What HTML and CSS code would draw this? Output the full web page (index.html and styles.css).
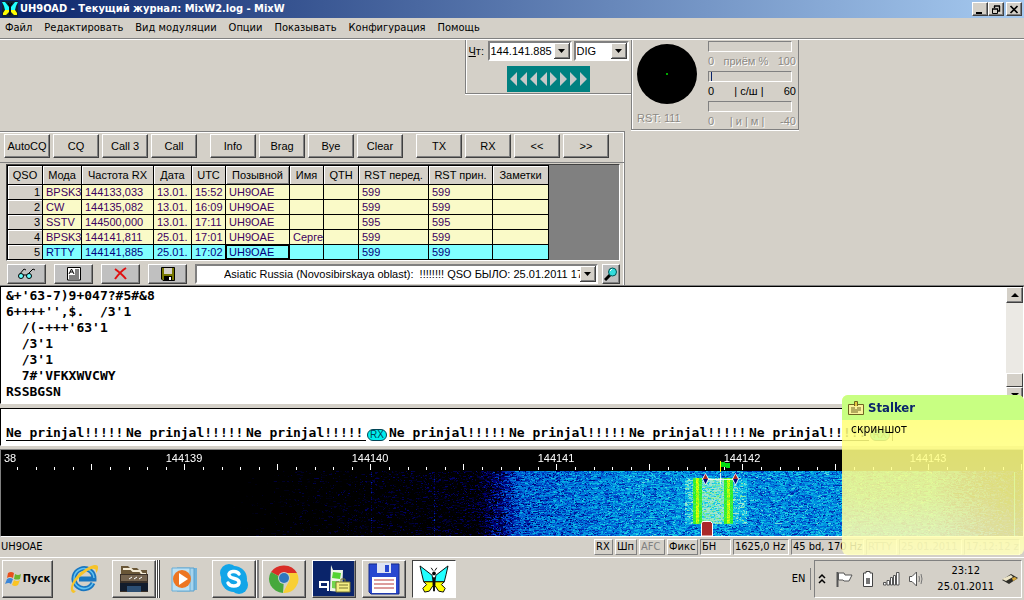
FILE: index.html
```html
<!DOCTYPE html>
<html lang="ru">
<head>
    <meta charset="UTF-8">
    <meta name="viewport" content="width=device-width, initial-scale=1.0">
    <title>UH9OAD - Текущий журнал: MixW2.log - MixW</title>
    <link rel="stylesheet" href="styles.css">
</head>
<body>
    <svg class="defs" width="0" height="0">
        <symbol id="butterfly" viewBox="0 0 32 30">
            <path d="M1 1 L14 11 L15 18 L5 18 L3 10Z M31 1 L18 11 L17 18 L27 18 L29 10Z" fill="#2ff" stroke="#000"/>
            <path d="M15 18 L5 18 L8 21 L4 25 L6 29 L11 28 L15 22Z M17 18 L27 18 L24 21 L28 25 L26 29 L21 28 L17 22Z" fill="#ff0" stroke="#000"/>
            <path d="M16 13 V28" stroke="#000" stroke-width="2"/>
            <circle cx="16" cy="9" r="2"/>
            <path d="M13 3 L15 6 M19 3 L17 6" stroke="#000"/>
        </symbol>
    </svg>

    <header class="titlebar">
        <svg class="title-icon" viewBox="0 0 16 16">
            <path d="M0 1H3L7 6V9H3L2 5Z M16 1H13L9 6V9H13L14 5Z" fill="#2ff"/>
            <path d="M3 9H7V11L4 14H1V12Z M13 9H9V11L12 14H15V12Z" fill="#ff0"/>
            <path d="M8 5V14 M6 2L8 5L10 2" stroke="#000" fill="none"/>
        </svg>
        <h1>UH9OAD - Текущий журнал: MixW2.log - MixW</h1>
        <button class="win-btn" aria-label="Свернуть"><svg width="10" height="9"><path d="M1 8H7" stroke="#000" stroke-width="2"/></svg></button>
        <button class="win-btn" aria-label="Восстановить"><svg width="10" height="9"><path d="M3 1H9 M3.5 1V3 M8.5 1V6H7 M1 4H7" stroke="#000" stroke-width="1.4" fill="none"/><path d="M1.5 4V8.5H6.5V4" stroke="#000" fill="none"/></svg></button>
        <button class="win-btn close" aria-label="Закрыть"><svg width="10" height="9"><path d="M1.5 1L8.5 8 M8.5 1L1.5 8" stroke="#000" stroke-width="1.7"/></svg></button>
    </header>

    <nav class="menu">
        <a href="#">Файл</a>
        <a href="#">Редактировать</a>
        <a href="#">Вид модуляции</a>
        <a href="#">Опции</a>
        <a href="#">Показывать</a>
        <a href="#">Конфигурация</a>
        <a href="#">Помощь</a>
    </nav>

    <section class="instruments">
        <div class="freq-panel">
            <div class="freq-row">
                <label for="freq"><u>Ч</u>т:</label>
                <select id="freq" class="combo freq"><option>144.141.885</option></select>
                <select id="mode" class="combo mode" aria-label="Режим"><option>DIG</option></select>
            </div>
            <button class="tuner" aria-label="Настройка частоты">
                <svg width="83" height="26" viewBox="0 0 83 26">
                    <path d="M3 13L10 6V20Z M13 13L20 6V20Z M23 13L30 6V20Z M33 13L40 6V20Z M43 6L50 13L43 20Z M53 6L60 13L53 20Z M63 6L70 13L63 20Z M73 6L80 13L73 20Z" fill="#c8c8c8"/>
                </svg>
            </button>
        </div>
        <div class="meter-panel">
            <div class="scope-col">
                <div class="scope"></div>
                <span class="off">RST: 111</span>
            </div>
            <div class="meters">
                <div class="bar"></div>
                <div class="scale off"><span>0</span><span>приём %</span><span>100</span></div>
                <div class="bar level"></div>
                <div class="scale"><span>0</span><span>| с/ш |</span><span>60</span></div>
                <div class="bar"></div>
                <div class="scale off"><span>0</span><span>| и | м |</span><span>-40</span></div>
            </div>
        </div>
    </section>

    <section class="logger">
        <div class="macros">
            <button>AutoCQ</button>
            <button>CQ</button>
            <button>Call 3</button>
            <button>Call</button>
            <button class="group">Info</button>
            <button>Brag</button>
            <button>Bye</button>
            <button>Clear</button>
            <button class="group">TX</button>
            <button>RX</button>
            <button>&lt;&lt;</button>
            <button>&gt;&gt;</button>
        </div>
        <div class="log">
            <table>
                <colgroup>
                    <col class="c-num"><col class="c-mode"><col class="c-freq"><col class="c-date"><col class="c-utc"><col class="c-call"><col class="c-utc"><col class="c-num"><col class="c-rst"><col class="c-call"><col class="c-note">
                </colgroup>
                <thead>
                    <tr><th>QSO</th><th>Мода</th><th>Частота RX</th><th>Дата</th><th>UTC</th><th class="sorted">Позывной</th><th>Имя</th><th>QTH</th><th>RST перед.</th><th>RST прин.</th><th>Заметки</th></tr>
                </thead>
                <tbody>
                    <tr><th>1</th><td>BPSK31</td><td>144133,033</td><td>13.01.</td><td>15:52</td><td>UH9OAE</td><td></td><td></td><td>599</td><td>599</td><td></td></tr>
                    <tr><th>2</th><td>CW</td><td>144135,082</td><td>13.01.</td><td>16:09</td><td>UH9OAE</td><td></td><td></td><td>599</td><td>599</td><td></td></tr>
                    <tr><th>3</th><td>SSTV</td><td>144500,000</td><td>13.01.</td><td>17:11</td><td>UH9OAE</td><td></td><td></td><td>595</td><td>595</td><td></td></tr>
                    <tr><th>4</th><td>BPSK31</td><td>144141,811</td><td>25.01.</td><td>17:01</td><td>UH9OAE</td><td>Сергей</td><td></td><td>599</td><td>599</td><td></td></tr>
                    <tr class="current"><th>5</th><td>RTTY</td><td>144141,885</td><td>25.01.</td><td>17:02</td><td class="active">UH9OAE</td><td></td><td></td><td>599</td><td>599</td><td></td></tr>
                </tbody>
            </table>
        </div>
        <div class="log-tools">
            <button class="tool" aria-label="Просмотр">
                <svg width="20" height="14"><path d="M2 8L7 2L9 3 M10 8L16 2L18 3 M6 8H10" stroke="#000" fill="none"/><circle cx="4" cy="9" r="2.5" fill="#6ff" stroke="#000"/><circle cx="12" cy="9" r="2.5" fill="#6ff" stroke="#000"/></svg>
            </button>
            <button class="tool" aria-label="Карточка">
                <svg width="16" height="14"><path d="M1.5 .5H14.5V13H1.5Z" fill="#fff" stroke="#000"/><path d="M3 7L5.5 2L8 7 M4 5H7 M9 3H13 M9 5H13 M9 7H13 M3 9H13 M3 11H13" stroke="#000" fill="none"/></svg>
            </button>
            <button class="tool" aria-label="Удалить">
                <svg width="16" height="14"><path d="M2 2C6 5 10 8 13 12 M13 1C8 4 5 8 2 12" stroke="#e01010" stroke-width="2" fill="none"/></svg>
            </button>
            <button class="tool" aria-label="Сохранить">
                <svg width="14" height="14"><path d="M.5 .5H13.5V13.5H2L.5 12Z" fill="#777700" stroke="#000"/><path d="M3 1H11V7H3Z" fill="#d4d0c8"/><path d="M3 9H11V13H3Z" fill="#000"/><path d="M8 10H10V13H8Z" fill="#fff"/></svg>
            </button>
            <div class="lookup">
                <select class="combo info" aria-label="Информация"><option>Asiatic Russia (Novosibirskaya oblast):&nbsp; !!!!!!!! QSO БЫЛО: 25.01.2011 17:02</option></select>
                <button class="tool find" aria-label="Найти">
                    <svg width="14" height="14"><path d="M1 13L6 8" stroke="#000" stroke-width="3"/><circle cx="8.500" cy="5" r="4" fill="#3dd" stroke="#055"/><path d="M6 4L8 2" stroke="#fff"/></svg>
                </button>
            </div>
        </div>
    </section>

    <section class="rx-window">
<pre class="mono">&amp;+'63-7)9+047?#5#&amp;8
6++++'',$.  /3'1
  /(-+++'63'1
  /3'1
  /3'1
  7#'VFKXWVCWY
RSSBGSN</pre>
        <div class="scrollbar">
            <button aria-label="Вверх"><svg width="8" height="4"><path d="M4 0L8 4H0Z"/></svg></button>
            <div class="thumb"></div>
            <button aria-label="Вниз"><svg width="8" height="4"><path d="M0 0H8L4 4Z"/></svg></button>
        </div>
    </section>

    <section class="tx-window mono">
        <span class="call">Ne prinjal!!!!!</span><span class="call">Ne prinjal!!!!!</span><span class="call">Ne prinjal!!!!!</span><span class="rx-mark">RX</span><span class="call">Ne prinjal!!!!!</span><span class="call">Ne prinjal!!!!!</span><span class="call">Ne prinjal!!!!!</span><span class="call">Ne prinjal!!!!!</span><span class="rx-mark">RX</span><span class="caret"></span>
    </section>

    <section class="spectrum">
        <div class="ruler">
            <span class="edge">38</span><span>144139</span><span>144140</span><span>144141</span><span>144142</span><span>144143</span>
        </div>
        <canvas id="waterfall"></canvas>
        <svg class="marker" width="44" height="76" viewBox="0 0 44 76">
            <path d="M20.500 0V11" stroke="#ff0"/>
            <path d="M21 1H25V2H30V7H26V6H21Z" fill="#0d1"/>
            <path d="M5 18.500H35 M20.500 12V23" stroke="#fff" stroke-opacity=".8"/>
            <path d="M5.500 12L9 18L5.500 24L2 18Z M35.500 12L39 18L35.500 24L32 18Z" fill="#fff"/>
            <path d="M5.500 13L8 18H3Z M35.500 13L38 18H33Z" fill="#a22"/>
            <path d="M5.500 23L8 18H3Z M35.500 23L38 18H33Z" fill="#007"/>
            <path d="M2.500 60.500H10.500L12.500 62.500V75H1.500V62.500Z" fill="#aa2a2a" stroke="#fff"/>
        </svg>
    </section>

    <footer class="statusbar">
        <span class="who">UH9OAE</span>
        <span class="cell raised w-xs">RX</span>
        <span class="cell raised w-s">Шп</span>
        <span class="cell raised w-m dim">AFC</span>
        <span class="cell raised w-l">Фикс</span>
        <span class="cell w-l">БН</span>
        <span class="cell w-xl">1625,0 Hz</span>
        <span class="cell w-xxl">45 bd, 170 Hz</span>
        <span class="cell w-l dim">RTTY</span>
        <span class="cell w-date dim">25.01.2011</span>
        <span class="cell w-xl dim">17:12:12 z</span>
    </footer>

    <footer class="taskbar">
        <button class="start">
            <svg width="18" height="18" viewBox="0 0 18 18"><path d="M3 3Q6 1 9 3L8 8Q5 6 2 8Z" fill="#e8501c"/><path d="M10 4Q13 6 16 4L15 9Q12 10 9 9Z" fill="#6cb52d"/><path d="M2 9Q5 7 8 9L6 14Q4 12 0 14Z" fill="#3a86d8"/><path d="M9 10Q12 12 15 10L13 15Q10 17 7 15Z" fill="#fbc422"/></svg>
            Пуск
        </button>
        <button class="task flat" aria-label="Internet Explorer">
            <svg width="34" height="32" viewBox="0 0 34 32"><path d="M26 20A10 10 0 1 1 27 16H12" fill="none" stroke="#1976c0" stroke-width="5"/><path d="M26 20A10 10 0 1 1 27 15" fill="none" stroke="#62c3f2" stroke-width="1.500"/><path d="M7 30C1 29 4 17 14 9S32 0 31 5C31 7 30 9 29 10C30 3 23 5 15 12S3 27 9 28Z" fill="#f6c32a"/></svg>
        </button>
        <button class="task stack2" aria-label="Проводник">
            <svg width="32" height="30" viewBox="0 0 32 30"><path d="M3 2H10L12 4H19L21 6H29V13H3Z" fill="#695637"/><path d="M5 5H13L15 7H22L24 10H28" stroke="#f3ead5" stroke-width="2" fill="none"/><path d="M2 10H30V28H2Z" fill="#3a3028"/><path d="M3 11H29V17H3Z" fill="#75644f"/><path d="M11 15L14 13M16 15L19 13M21 15L24 13" stroke="#fff"/><path d="M2 19H30V27H2Z" fill="#121c2c"/><path d="M9 22H23V28H9Z" fill="#2c4e72"/></svg>
        </button>
        <button class="task flat" aria-label="Проигрыватель">
            <svg width="32" height="30" viewBox="0 0 32 30"><path d="M12 4H29V26H12Z" fill="#71b4dc"/><path d="M9 4H26V27H9Z" fill="#a5d4ee" stroke="#5aa0cc"/><path d="M4 4H22V27H4Z" fill="#bde1f4" stroke="#6aaed6"/><circle cx="14" cy="15" r="9" fill="#ed7623"/><path d="M11 9L20 15L11 21Z" fill="#fff"/></svg>
        </button>
        <button class="task stack" aria-label="Skype">
            <svg width="32" height="32" viewBox="0 0 32 32"><circle cx="11" cy="10" r="9" fill="#12a5e8"/><circle cx="21" cy="22" r="9" fill="#12a5e8"/><circle cx="16" cy="16" r="13" fill="#12a5e8"/><path d="M21 11C19 7 10 8 11 12C12 17 22 14 21 20C20 24 12 24 10 20" fill="none" stroke="#fff" stroke-width="3.500" stroke-linecap="round"/></svg>
        </button>
        <button class="task" aria-label="Chrome">
            <svg width="32" height="30" viewBox="0 0 32 30"><path d="M16 15L3 8A15 14 0 0 1 29 9H16Z" fill="#d92d27"/><path d="M16 15L15 29A15 14 0 0 1 3 8Z" fill="#46a83c"/><path d="M16 9H29A14 14 0 0 1 15 29L21 17Z" fill="#f8cf35"/><circle cx="16" cy="14" r="6" fill="#c8d0d0"/><circle cx="16" cy="14" r="5" fill="#2d77bd"/></svg>
        </button>
        <button class="task navy" aria-label="QIP">
            <svg width="34" height="32" viewBox="0 0 34 32"><path d="M14 2L16 7H26L25 29L13 28Z" fill="#eef4e5"/><path d="M16 9L24 10L23 16L15 15Z" fill="#53d331"/><path d="M15 18L22 18L21 26L15 25Z" fill="#74d64f"/><path d="M11 28V19H3V24H10" fill="none" stroke="#fff" stroke-width="2"/><path d="M19 19H33V29H19Z" fill="#f4ef84" stroke="#7b7730"/><path d="M24 19V16H28V19M22 22H31M22 25H31" stroke="#7b7730" fill="none"/></svg>
        </button>
        <button class="task" aria-label="Total Commander">
            <svg width="32" height="32" viewBox="0 0 32 32"><path d="M1 1H31V31H3L1 29Z" fill="#2848d0" stroke="#152a8c"/><path d="M9 0H23V10H9Z" fill="#dfe4f3"/><path d="M17 2H21V9H17Z" fill="#2848d0"/><path d="M4 14H28V30H4Z" fill="#fff"/><path d="M6 17H26M6 21H26M6 25H26" stroke="#b93a3a"/></svg>
        </button>
        <button class="task pressed" aria-label="MixW">
            <svg width="32" height="28"><use href="#butterfly"/></svg>
        </button>
        <span class="lang">EN</span>
        <div class="tray">
            <svg width="9" height="12" viewBox="0 0 9 12"><path d="M1 5L4 2L7 5M1 10L4 7L7 10" fill="none" stroke="#000" stroke-width="1.500"/></svg>
            <svg width="18" height="18" viewBox="0 0 18 18"><path d="M2.500 2V17" stroke="#555" stroke-width="2"/><path d="M3.500 3H9L10 5H17L14 11H9L8 10H3.500Z" fill="#fff" stroke="#555"/></svg>
            <svg width="14" height="18" viewBox="0 0 14 18"><path d="M5 1.500H9V3H11.500V16.500H2.500V3H5Z" fill="#fff" stroke="#444"/><path d="M5 8H9V14H5Z" fill="#777"/></svg>
            <svg width="17" height="14" viewBox="0 0 17 14"><path d="M.5 10.500H3V13H.5Z M4 8.500H6.500V13H4Z M7.500 5.500H9.500V13H7.500Z M10.500 3.500H12.500V13H10.500Z M13.500 .5H16V13H13.500Z" fill="#fff" stroke="#555"/></svg>
            <svg width="16" height="16" viewBox="0 0 16 16"><path d="M1.500 5.500H4L8.500 1V15L4 10.500H1.500Z" fill="#fff" stroke="#555"/><path d="M11 5Q12 8 11 11M13 3Q15 8 13 13" fill="none" stroke="#777"/></svg>
            <time>23:12<br>25.01.2011</time>
            <svg width="16" height="12" viewBox="0 0 16 12"><path d="M0 7L9 1L16 5L7 11Z" fill="#2d2d28"/><path d="M0 6L9 2L11 4L4 8Z" fill="#eee6c8"/><path d="M10 5L13 4L15 6L11 8Z" fill="#d8a838"/></svg>
        </div>
    </footer>

    <aside class="popup">
        <h2>
            <svg width="16" height="14" viewBox="0 0 16 14"><path d="M.5 3.500H15.500V13.500H.5Z" fill="#faf29a" stroke="#6e6522"/><path d="M6.500 5V.5H9.500V5" fill="#e8c840" stroke="#6e6522"/><path d="M3 7H7M9 7H13M3 9H13M3 11H10" stroke="#6e6522"/></svg>
            Stalker
        </h2>
        <p>скриншот</p>
    </aside>

    <script src="waterfall.js"></script>
</body>
</html>
```

FILE: styles.css
```css
* {
    box-sizing: border-box;
}
body {
    margin: 0;
    height: 100vh;
    display: flex;
    flex-direction: column;
    position: relative;
    overflow: hidden;
    background: #d4d0c8;
    color: #000;
    font: 11px/14px "Liberation Sans", Arial, sans-serif;
}
body > * {
    flex: none;
}
button {
    display: flex;
    align-items: center;
    justify-content: center;
    padding: 0;
    background: #d4d0c8;
    border: 1px solid;
    border-color: #fff #404040 #404040 #fff;
    box-shadow: inset -1px -1px 0 #808080;
    color: #000;
    font: inherit;
}
svg {
    flex: none;
}
.defs {
    position: absolute;
}

/* title and menu */
.titlebar {
    display: flex;
    align-items: center;
    height: 18px;
    padding: 0 2px;
    background: linear-gradient(to right, #0a246a, #a6caf0);
}
.title-icon {
    width: 16px;
    height: 16px;
    margin-right: 2px;
    background: #123;
}
.titlebar h1 {
    flex: 1;
    margin: 0;
    color: #fff;
    font: bold 11px/18px Tahoma, "DejaVu Sans Condensed", sans-serif;
}
.win-btn {
    width: 16px;
    height: 14px;
}
.win-btn.close {
    margin-left: 2px;
}
.menu {
    display: flex;
    gap: 12px;
    height: 22px;
    padding: 0 5px;
    border-bottom: 1px solid #fff;
    box-shadow: inset 0 -1px 0 #808080;
    font: 11px/20px Tahoma, "DejaVu Sans Condensed", sans-serif;
}
.menu a {
    color: #000;
    text-decoration: none;
}

/* frequency and meters */
.instruments {
    display: flex;
    align-items: flex-start;
    height: 91px;
    padding-left: 465px;
}
.freq-panel,
.meter-panel {
    border: 1px solid #808080;
    border-top: 0;
    box-shadow: inset 1px 0 0 #fff, 0 1px 0 #fff;
}
.freq-panel {
    display: flex;
    flex-direction: column;
    align-items: center;
    gap: 5px;
    width: 166px;
    height: 54px;
    padding: 1px 3px;
    border-right: 0;
}
.freq-row {
    display: flex;
    align-items: center;
    gap: 2px;
}
.freq-row label {
    width: 17px;
}
.combo {
    appearance: none;
    height: 20px;
    margin: 0;
    padding: 0 16px 0 1px;
    border: 2px solid;
    border-color: #808080 #fff #fff #808080;
    border-radius: 0;
    outline: 0;
    color: #000;
    font: inherit;
    text-overflow: clip;
    background: #fff url("data:image/svg+xml,%3Csvg xmlns='http://www.w3.org/2000/svg' width='16' height='16'%3E%3Cpath d='M0 0H16V16H0Z' fill='%23404040'/%3E%3Cpath d='M0 0H15V15H0Z' fill='%23fff'/%3E%3Cpath d='M1 1H15V15H1Z' fill='%23808080'/%3E%3Cpath d='M1 1H14V14H1Z' fill='%23d4d0c8'/%3E%3Cpath d='M4 6H11L7.500 10Z'/%3E%3C/svg%3E") right center no-repeat;
}
.freq {
    width: 84px;
}
.mode {
    width: 55px;
}
.tuner {
    width: 83px;
    height: 26px;
    border: 0;
    background: #008080;
    box-shadow: none;
}
.meter-panel {
    display: flex;
    gap: 11px;
    width: 168px;
    height: 90px;
    padding: 1px 2px 0 5px;
}
.scope-col {
    width: 60px;
}
.scope {
    width: 60px;
    height: 60px;
    margin: 3px 0 7px;
    border-radius: 50%;
    background: radial-gradient(circle, #0a0 1px, #000 1px);
}
.off {
    color: #8c8984;
    text-shadow: 1px 1px 0 #fff;
}
.meters {
    flex: 1;
}
.bar {
    height: 11px;
    margin-right: 4px;
    border: 1px solid;
    border-color: #808080 #fff #fff #808080;
}
.level {
    box-shadow: inset 2px 0 0 #d4d0c8, inset 3px 0 0 #0a246a;
}
.scale {
    display: flex;
    justify-content: space-between;
    height: 19px;
    line-height: 18px;
}

/* macros and log */
.logger {
    width: 625px;
    height: 155px;
    border-top: 1px solid #808080;
    border-right: 1px solid #808080;
    box-shadow: inset 0 1px 0 #fff, inset -1px 0 0 #fff;
}
.macros {
    display: flex;
    gap: 3px;
    height: 31px;
    padding: 2px 4px 5px;
    border-bottom: 1px solid #808080;
}
.macros button {
    width: 46px;
    height: 24px;
}
.macros .group {
    margin-left: 10px;
}
.log {
    width: 614px;
    height: 97px;
    margin: 1px 0 3px 6px;
    border: 1px solid;
    border-color: #404040 #fff #fff #404040;
    background: #808080;
    overflow: hidden;
}
.log table {
    table-layout: fixed;
    width: 541px;
    border-collapse: collapse;
}
.c-num { width: 35px; }
.c-mode { width: 39px; }
.c-freq { width: 72px; }
.c-date { width: 38px; }
.c-utc { width: 34px; }
.c-call { width: 64px; }
.c-rst { width: 70px; }
.c-note { width: 56px; }
.log th,
.log td {
    height: 15px;
    padding: 0 0 0 3px;
    border: 1px solid #000;
    font-weight: normal;
    line-height: 14px;
    text-align: left;
    white-space: nowrap;
    overflow: hidden;
}
.log th {
    background: #d4d0c8;
    box-shadow: inset 1px 1px 0 #fff;
}
.log thead th {
    height: 19px;
    padding: 0;
    text-align: center;
}
.log thead .sorted {
    box-shadow: inset 1px 1px 0 #fff, inset -1px -1px 0 #808080;
}
.log tbody th {
    padding-right: 2px;
    text-align: right;
}
.log td {
    background: #fafac8;
    color: #400060;
}
.log .current td {
    background: #80ffff;
    color: #000080;
}
.log .current .active {
    box-shadow: inset 0 0 0 1px #000;
}
.log-tools {
    display: flex;
    align-items: center;
    gap: 8px;
    padding: 0 4px 0 7px;
}
.tool {
    width: 39px;
    height: 20px;
    background: #c0c0c0;
}
.lookup {
    flex: 1;
    display: flex;
    gap: 4px;
    min-width: 0;
}
.find {
    width: 18px;
}
.combo.info {
    flex: 1;
    min-width: 0;
    padding-left: 27px;
}

/* receive and transmit windows */
.mono {
    margin: 0;
    font: bold 13px/16px "DejaVu Sans Mono", "Liberation Mono", monospace;
}
.rx-window {
    flex: 1 1 0;
    display: flex;
    min-height: 0;
    border: 1px solid;
    border-color: #000 #fff #fff #000;
    box-shadow: 0 -1px 0 #808080;
    background: #fff;
}
.rx-window pre {
    flex: 1;
    padding: 1px 0 0 5px;
}
.scrollbar {
    display: flex;
    flex-direction: column;
    width: 17px;
    background: #ebe9e4;
}
.scrollbar button {
    height: 16px;
}
.thumb {
    height: 14px;
    margin-top: auto;
    background: #d4d0c8;
    border: 1px solid;
    border-color: #fff #404040 #404040 #fff;
}
.tx-window {
    display: flex;
    align-items: flex-end;
    height: 38px;
    margin: 4px 0 3px;
    padding: 0 5px 4px;
    border: 1px solid;
    border-color: #000 #fff #fff #000;
    background: #fff;
}
.call {
    flex: 0 0 120px;
    height: 15px;
    line-height: 14px;
    border-bottom: 1px solid #000;
}
.rx-mark {
    width: 20px;
    height: 12px;
    margin: 0 2px 0 1px;
    border: 1px solid #045;
    border-radius: 6px;
    background: #0ee;
    color: #045;
    font: 10px/10px "Liberation Sans", sans-serif;
    text-align: center;
}
.caret {
    width: 1px;
    height: 16px;
    background: #000;
}

/* spectrum */
.spectrum {
    position: relative;
    display: flex;
    flex-direction: column;
    height: 88px;
    border: 1px solid;
    border-color: #808080 #fff #fff #808080;
    background: #000;
    overflow: hidden;
}
.ruler {
    display: flex;
    height: 0;
    color: #fff;
}
.ruler span {
    position: relative;
    flex: 0 0 186px;
    text-align: center;
    font: 11px/17px "Liberation Sans", sans-serif;
}
.ruler .edge {
    flex-basis: 90px;
    padding-left: 3px;
    text-align: left;
}
#waterfall {
    width: 100%;
    height: 86px;
}
.marker {
    position: absolute;
    left: 699px;
    top: 11px;
}

/* status */
.statusbar {
    display: flex;
    align-items: center;
    gap: 2px;
    height: 20px;
    padding: 2px 4px 2px 1px;
    font: 11px/14px Tahoma, "DejaVu Sans Condensed", sans-serif;
}
.who {
    flex: 1;
}
.cell {
    height: 16px;
    padding-left: 1px;
    border: 1px solid;
    border-color: #808080 #fff #fff #808080;
    white-space: nowrap;
    overflow: hidden;
}
.raised {
    border-color: #fff #808080 #808080 #fff;
}
.dim {
    color: #808080;
}
.w-xs { width: 19px; }
.w-s { width: 22px; }
.w-m { width: 26px; }
.w-l { width: 31px; }
.w-xl { width: 56px; }
.w-xxl { width: 73px; }
.w-date { width: 63px; }

/* taskbar */
.taskbar {
    display: flex;
    align-items: center;
    gap: 6px;
    height: 43px;
    padding: 1px 2px;
    border-top: 1px solid #fff;
    font: 11px/16px Tahoma, "DejaVu Sans Condensed", sans-serif;
}
.start {
    width: 51px;
    height: 38px;
    gap: 0;
    margin-right: 3px;
    font-weight: bold;
}
.task {
    width: 44px;
    height: 38px;
    box-shadow: inset -1px -1px 0 #808080;
}
.taskbar .flat {
    border-color: transparent;
    box-shadow: none;
}
.stack {
    box-shadow: inset -1px -1px 0 #808080, 1px 0 0 #fff, 3px 0 0 #808080;
}
.stack2 {
    box-shadow: inset -1px -1px 0 #808080, 1px 0 0 #fff, 2px 0 0 #404040, 3px 0 0 #fff, 4px 0 0 #404040;
}
.navy {
    background: #0a246a;
}
.pressed {
    border-color: #404040 #fff #fff #404040;
    background: #fff;
    box-shadow: none;
}
.lang {
    margin-left: auto;
    padding-right: 5px;
    border-right: 1px solid #808080;
    line-height: 22px;
}
.tray {
    display: flex;
    align-items: center;
    gap: 8px;
    height: 38px;
    margin-left: -3px;
    padding: 0 3px;
    border: 1px solid;
    border-color: #808080 #fff #fff #808080;
}
.tray time {
    margin-left: 5px;
    text-align: center;
}

/* message popup */
.popup {
    position: absolute;
    right: 0;
    bottom: 45px;
    width: 182px;
    height: 160px;
    border-radius: 6px;
    background: linear-gradient(rgba(255, 255, 120, 0.87) 25px, rgba(255, 255, 145, 0.87) 100px, rgba(255, 255, 190, 0.87));
    overflow: hidden;
}
.popup h2 {
    display: flex;
    align-items: center;
    gap: 4px;
    height: 25px;
    margin: 0;
    padding-left: 6px;
    background: #c8ff82;
    color: #0a246a;
    font: bold 13px/25px Tahoma, "DejaVu Sans Condensed", sans-serif;
}
.popup p {
    margin: 0;
    padding: 1px 9px;
    font: 12px/16px Tahoma, "DejaVu Sans Condensed", sans-serif;
}
```

FILE: waterfall.js
```js
const canvas = document.getElementById('waterfall');
const ctx = canvas.getContext('2d');
const w = canvas.width = canvas.clientWidth;
const h = canvas.height = canvas.clientHeight;
const top0 = 21;

// level -> colour
const palette = [
    [0, 0, 0, 0],
    [0.25, 0, 0, 130],
    [0.45, 0, 80, 205],
    [0.65, 0, 150, 225],
    [0.85, 20, 205, 230],
    [1, 170, 230, 210],
    [1.3, 40, 240, 40],
    [1.6, 255, 255, 0]
];

let seed = 7;
function rnd() {
    seed = (seed * 1664525 + 1013904223) % 4294967296;
    return seed / 4294967296;
}

function color(v) {
    v = Math.max(0, Math.min(1.59, v));
    let i = 0;
    while (v >= palette[i + 1][0]) i++;
    const a = palette[i], b = palette[i + 1];
    const t = (v - a[0]) / (b[0] - a[0]);
    return [1, 2, 3].map(k => a[k] + (b[k] - a[k]) * t);
}

function noiseFloor(x) {
    if (x < 180) return -0.4;
    if (x < 300) return -0.4 + (x - 180) / 120 * 0.24;
    if (x < 475) return -0.16 + (x - 300) / 175 * 0.12;
    if (x < 520) return -0.04 + (x - 475) / 45 * 0.52;
    if (x < 640) return 0.48 + (x - 520) / 120 * 0.14;
    if (x < 930) return 0.62;
    return 0.62 - (x - 930) / 90 * 0.6;
}

const img = ctx.createImageData(w, h);
for (let y = 0; y < h; y++) {
    let n = 0;
    for (let x = 0; x < w; x++) {
        if (rnd() > 0.35) n = (rnd() + rnd() - 1) * 0.33;
        let v = noiseFloor(x) + n;
        if (y < top0) v = 0;
        else if (y > 27 && y < 74) {
            const d = Math.min(Math.abs(x - 696), Math.abs(x - 727));
            if (d < 2) v = 1.5 + n * 0.4;
            else if (d < 5) v = 1.28 + n * 0.3;
            else if (x > 700 && x < 724) v = 0.98 + n * 0.7;
            else if (x > 683 && x < 746) v += 0.2;
        }
        if (y > top0 && (x === 370 || x === 433)) v += 0.2;
        if (y > top0 && x === 1013) v = 0.8;
        const c = color(v);
        const p = (y * w + x) * 4;
        img.data[p] = c[0];
        img.data[p + 1] = c[1];
        img.data[p + 2] = c[2];
        img.data[p + 3] = 255;
    }
}
ctx.putImageData(img, 0, 0);

// ruler ticks, every fifth is long
ctx.fillStyle = '#fff';
for (let i = 0; i < 55; i++) {
    const long = i % 5 === 4;
    ctx.fillRect(Math.round(16 + i * 18.6), long ? 14 : 17, 1, long ? 6 : 3);
}
```
